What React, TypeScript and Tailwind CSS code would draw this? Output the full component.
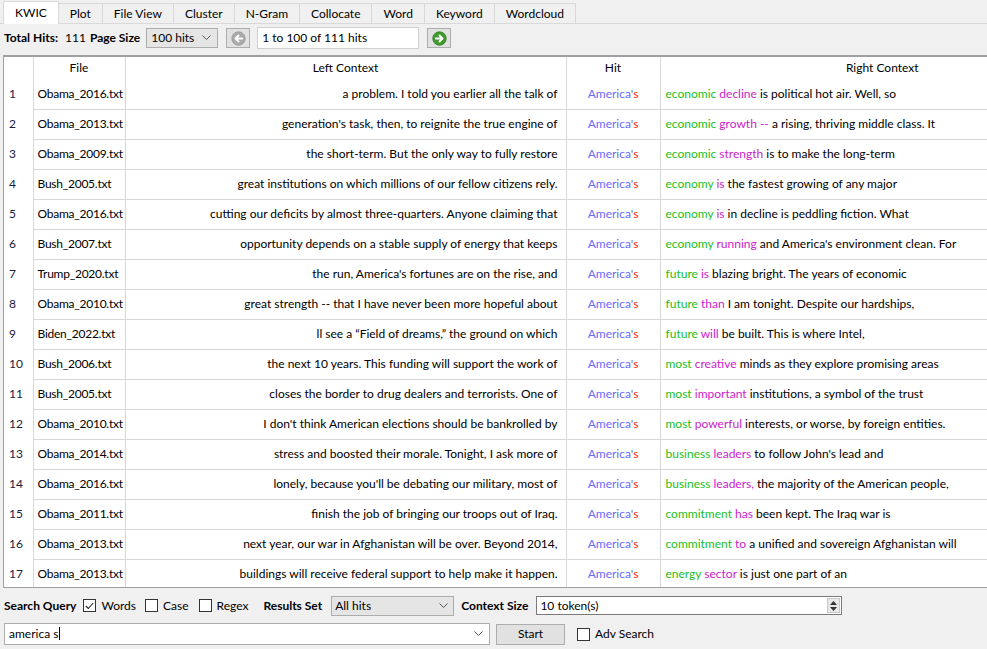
import React from 'react';

type Row = { file: string; left: string; w1: string; w2: string; rest: string };

const rows: Row[] = [
    { file: 'Obama_2016.txt', left: 'a problem. I told you earlier all the talk of', w1: 'economic', w2: 'decline', rest: 'is political hot air. Well, so' },
    { file: 'Obama_2013.txt', left: "generation's task, then, to reignite the true engine of", w1: 'economic', w2: 'growth --', rest: 'a rising, thriving middle class. It' },
    { file: 'Obama_2009.txt', left: 'the short-term. But the only way to fully restore', w1: 'economic', w2: 'strength', rest: 'is to make the long-term' },
    { file: 'Bush_2005.txt', left: 'great institutions on which millions of our fellow citizens rely.', w1: 'economy', w2: 'is', rest: 'the fastest growing of any major' },
    { file: 'Obama_2016.txt', left: 'cutting our deficits by almost three-quarters. Anyone claiming that', w1: 'economy', w2: 'is', rest: 'in decline is peddling fiction. What' },
    { file: 'Bush_2007.txt', left: 'opportunity depends on a stable supply of energy that keeps', w1: 'economy', w2: 'running', rest: "and America's environment clean. For" },
    { file: 'Trump_2020.txt', left: "the run, America's fortunes are on the rise, and", w1: 'future', w2: 'is', rest: 'blazing bright. The years of economic' },
    { file: 'Obama_2010.txt', left: 'great strength -- that I have never been more hopeful about', w1: 'future', w2: 'than', rest: 'I am tonight. Despite our hardships,' },
    { file: 'Biden_2022.txt', left: 'll see a \u201cField of dreams,\u201d the ground on which', w1: 'future', w2: 'will', rest: 'be built. This is where Intel,' },
    { file: 'Bush_2006.txt', left: 'the next 10 years. This funding will support the work of', w1: 'most', w2: 'creative', rest: 'minds as they explore promising areas' },
    { file: 'Bush_2005.txt', left: 'closes the border to drug dealers and terrorists. One of', w1: 'most', w2: 'important', rest: 'institutions, a symbol of the trust' },
    { file: 'Obama_2010.txt', left: "I don't think American elections should be bankrolled by", w1: 'most', w2: 'powerful', rest: 'interests, or worse, by foreign entities.' },
    { file: 'Obama_2014.txt', left: 'stress and boosted their morale. Tonight, I ask more of', w1: 'business', w2: 'leaders', rest: "to follow John's lead and" },
    { file: 'Obama_2016.txt', left: "lonely, because you'll be debating our military, most of", w1: 'business', w2: 'leaders,', rest: 'the majority of the American people,' },
    { file: 'Obama_2011.txt', left: 'finish the job of bringing our troops out of Iraq.', w1: 'commitment', w2: 'has', rest: 'been kept. The Iraq war is' },
    { file: 'Obama_2013.txt', left: 'next year, our war in Afghanistan will be over. Beyond 2014,', w1: 'commitment', w2: 'to', rest: 'a unified and sovereign Afghanistan will' },
    { file: 'Obama_2013.txt', left: 'buildings will receive federal support to help make it happen.', w1: 'energy', w2: 'sector', rest: 'is just one part of an' },
];

const tabs = ['KWIC', 'Plot', 'File View', 'Cluster', 'N-Gram', 'Collocate', 'Word', 'Keyword', 'Wordcloud'];

function Chevron() {
    return (
        <svg width="9" height="6" viewBox="0 0 9 6" className="shrink-0">
            <path d="M0.5 0.5 L4.5 4.5 L8.5 0.5" fill="none" stroke="#555" strokeWidth="1" />
        </svg>
    );
}

function Check({ checked, label }: { checked?: boolean; label: string }) {
    return (
        <label className="flex items-center gap-[5px]">
            <span className="flex h-[13px] w-[13px] items-center justify-center border border-[#333] bg-white">
                {checked && (
                    <svg width="9" height="8" viewBox="0 0 9 8">
                        <path d="M0.8 4 L3.3 6.5 L8.2 1" fill="none" stroke="#222" strokeWidth="1.1" />
                    </svg>
                )}
            </span>
            <span>{label}</span>
        </label>
    );
}

function ArrowButton({ dir }: { dir: 'left' | 'right' }) {
    const on = dir === 'right';
    return (
        <div className="flex h-[20px] w-[24px] items-center justify-center border border-[#adadad] bg-[#e1e1e1]">
            <svg width="15" height="15" viewBox="0 0 16 16">
                <circle cx="8" cy="8" r="7.2" fill={on ? '#3d9a2b' : '#a9a9a9'} stroke={on ? '#2a7a1e' : '#9a9a9a'} strokeWidth="0.8" />
                {on ? (
                    <path d="M4 8 H11 M8 4.8 L11.2 8 L8 11.2" fill="none" stroke="white" strokeWidth="2" strokeLinecap="round" strokeLinejoin="round" />
                ) : (
                    <path d="M12 8 H5 M8 4.8 L4.8 8 L8 11.2" fill="none" stroke="white" strokeWidth="2" strokeLinecap="round" strokeLinejoin="round" />
                )}
            </svg>
        </div>
    );
}

export default function App() {
    return (
        <div className="flex h-[649px] w-[987px] flex-col overflow-hidden bg-[#f0f0f0] text-[12px] text-black" style={{ fontFamily: '"Segoe UI", Lato, "Noto Sans", sans-serif' }}>
            {/* tabs */}
            <div className="flex h-[24px] items-end border-b border-[#d9d9d9] pl-[3px]">
                {tabs.map((t, i) => (
                    <div
                        key={t}
                        className={
                            i === 0
                                ? 'relative -mb-px flex h-[23px] items-center border border-b-0 border-[#d9d9d9] bg-white px-[11px]'
                                : 'flex h-[20px] items-center border border-l-0 border-b-0 border-[#d9d9d9] bg-[#f0f0f0] px-[11px]'
                        }
                    >
                        {t}
                    </div>
                ))}
            </div>

            {/* toolbar */}
            <div className="flex h-[26px] items-center pl-[4px] pt-[2px]">
                <span className="font-bold">Total Hits:</span>
                <span className="ml-[7px]">111</span>
                <span className="ml-[4px] font-bold">Page Size</span>
                <div className="ml-[6px] flex h-[20px] w-[72px] items-center justify-between border border-[#adadad] bg-[#e5e5e5] pl-[4px] pr-[6px]">
                    <span>100 hits</span>
                    <Chevron />
                </div>
                <div className="ml-[8px]">
                    <ArrowButton dir="left" />
                </div>
                <div className="ml-[7px] flex h-[22px] w-[162px] items-center border border-[#d0d0d0] bg-white pl-[4px]">1 to 100 of 111 hits</div>
                <div className="ml-[8px]">
                    <ArrowButton dir="right" />
                </div>
            </div>

            {/* table */}
            <div className="mt-[5px] ml-[3px] h-[533px] overflow-hidden border-t-2 border-l border-b border-t-[#a0a0a0] border-l-[#a0a0a0] border-b-[#a0a0a0] bg-white">
                <table className="table-fixed border-collapse" style={{ width: 1130 }}>
                    <colgroup>
                        <col style={{ width: 29 }} />
                        <col style={{ width: 92 }} />
                        <col style={{ width: 441 }} />
                        <col style={{ width: 94 }} />
                        <col style={{ width: 474 }} />
                    </colgroup>
                    <thead>
                        <tr className="h-[22px]">
                            <th className="border-r border-[#d8d8d8] font-normal" />
                            <th className="border-r border-[#d8d8d8] font-normal">File</th>
                            <th className="border-r border-[#d8d8d8] font-normal">Left Context</th>
                            <th className="border-r border-[#d8d8d8] font-normal">Hit</th>
                            <th className="pr-[30px] font-normal">Right Context</th>
                        </tr>
                    </thead>
                    <tbody>
                        {rows.map((r, i) => (
                            <tr key={i} className="h-[30px]">
                                <td className="border-r border-[#d8d8d8] pl-[5px] text-[#1a1a40]">{i + 1}</td>
                                <td className="overflow-hidden border-r border-b border-[#d8d8d8] pl-[4px] tracking-[-0.25px] whitespace-nowrap">{r.file}</td>
                                <td className="overflow-hidden border-r border-b border-[#d8d8d8] pr-[8px] text-right whitespace-nowrap">{r.left}</td>
                                <td className="border-r border-b border-[#d8d8d8] text-center whitespace-nowrap">
                                    <span className="text-[#6a6aff]">America'</span>
                                    <span className="text-[#ff1a1a]">s</span>
                                </td>
                                <td className="border-b border-[#d8d8d8] pl-[5px] whitespace-nowrap">
                                    <span className="text-[#22c01a]">{r.w1}</span>{' '}
                                    <span className="text-[#cc22cc]">{r.w2}</span> {r.rest}
                                </td>
                            </tr>
                        ))}
                    </tbody>
                </table>
            </div>

            {/* search controls */}
            <div className="flex h-[33px] items-center pl-[4px] pt-[2px]">
                <span className="font-bold">Search Query</span>
                <div className="ml-[7px]">
                    <Check checked label="Words" />
                </div>
                <div className="ml-[9px]">
                    <Check label="Case" />
                </div>
                <div className="ml-[10px]">
                    <Check label="Regex" />
                </div>
                <span className="ml-[15px] font-bold">Results Set</span>
                <div className="ml-[9px] flex h-[20px] w-[123px] items-center justify-between border border-[#adadad] bg-[#e5e5e5] pl-[3px] pr-[5px]">
                    <span>All hits</span>
                    <Chevron />
                </div>
                <span className="ml-[7px] font-bold">Context Size</span>
                <div className="ml-[8px] flex h-[19px] w-[306px] items-center justify-between border border-[#7a7a7a] bg-white pl-[3px]">
                    <span>10 token(s)</span>
                    <div className="mr-[1px] flex h-[15px] w-[13px] flex-col items-center justify-center gap-[2px] border border-[#c8c8c8] bg-[#e8e8e8]">
                        <svg width="7" height="4" viewBox="0 0 7 4"><path d="M0 4 L3.5 0 L7 4 Z" fill="#333" /></svg>
                        <svg width="7" height="4" viewBox="0 0 7 4"><path d="M0 0 L3.5 4 L7 0 Z" fill="#333" /></svg>
                    </div>
                </div>
            </div>
            <div className="flex h-[26px] items-center pl-[4px]">
                <div className="flex h-[22px] w-[486px] items-center justify-between border border-[#adadad] bg-white pl-[4px] pr-[6px]">
                    <span>
                        america s<span className="ml-px inline-block h-[13px] w-px translate-y-[2px] bg-black" />
                    </span>
                    <Chevron />
                </div>
                <div className="ml-[6px] flex h-[21px] w-[69px] items-center justify-center border border-[#adadad] bg-[#e1e1e1]">Start</div>
                <div className="ml-[12px]">
                    <Check label="Adv Search" />
                </div>
            </div>
        </div>
    );
}
